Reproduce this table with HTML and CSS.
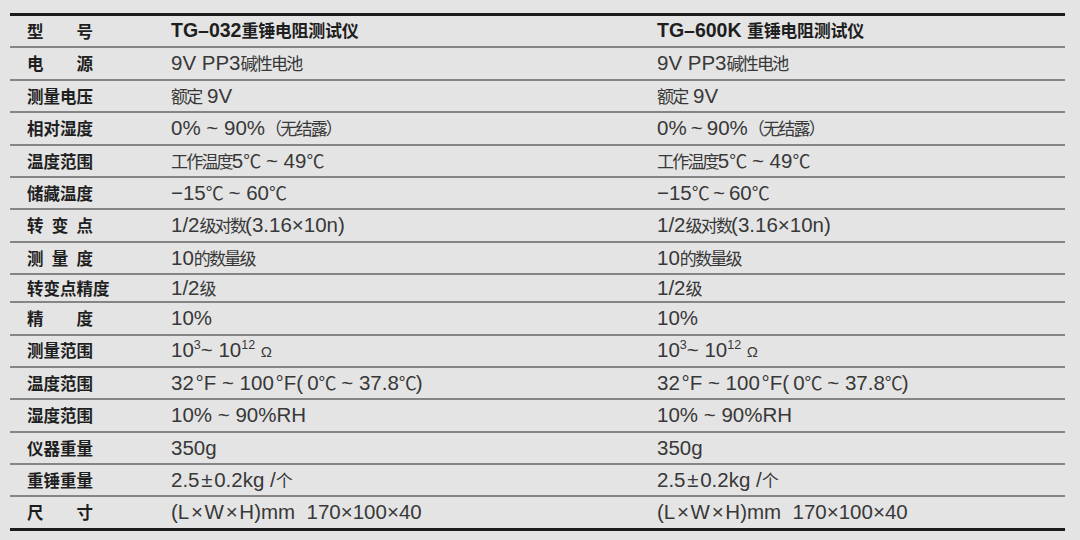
FILE: index.html
```html
<!DOCTYPE html>
<html lang="zh-CN">
<head>
<meta charset="utf-8">
<title>重锤电阻测试仪 参数</title>
<link rel="stylesheet" href="styles.css">
</head>
<body>
<div class="spec">
  <div class="row head">
    <div class="label"><span>型</span><span>号</span></div>
    <div class="val">TG–032<span class="zh">重锤电阻测试仪</span></div>
    <div class="val">TG–600K <span class="zh">重锤电阻测试仪</span></div>
  </div>
  <div class="row">
    <div class="label"><span>电</span><span>源</span></div>
    <div class="val">9V PP3<span class="zh">碱性电池</span></div>
    <div class="val">9V PP3<span class="zh">碱性电池</span></div>
  </div>
  <div class="row">
    <div class="label">测量电压</div>
    <div class="val"><span class="zh">额定</span> 9V</div>
    <div class="val"><span class="zh">额定</span> 9V</div>
  </div>
  <div class="row">
    <div class="label">相对湿度</div>
    <div class="val">0% ~ 90%<span class="zh">（无结露）</span></div>
    <div class="val">0%&#8201;~&#8201;90%<span class="zh">（无结露）</span></div>
  </div>
  <div class="row">
    <div class="label">温度范围</div>
    <div class="val"><span class="zh">工作温度</span>5<span class="deg">℃</span> ~ 49<span class="deg">℃</span></div>
    <div class="val"><span class="zh">工作温度</span>5<span class="deg">℃</span> ~ 49<span class="deg">℃</span></div>
  </div>
  <div class="row">
    <div class="label">储藏温度</div>
    <div class="val">−15<span class="deg">℃</span> ~ 60<span class="deg">℃</span></div>
    <div class="val">−15<span class="deg">℃</span>&#8201;~&#8201;60<span class="deg">℃</span></div>
  </div>
  <div class="row">
    <div class="label"><span>转</span><span>变</span><span>点</span></div>
    <div class="val">1/2<span class="zh">级对数</span>(3.16×10n)</div>
    <div class="val">1/2<span class="zh">级对数</span>(3.16×10n)</div>
  </div>
  <div class="row">
    <div class="label"><span>测</span><span>量</span><span>度</span></div>
    <div class="val">10<span class="zh">的数量级</span></div>
    <div class="val">10<span class="zh">的数量级</span></div>
  </div>
  <div class="row short">
    <div class="label">转变点精度</div>
    <div class="val">1/2<span class="zh">级</span></div>
    <div class="val">1/2<span class="zh">级</span></div>
  </div>
  <div class="row">
    <div class="label"><span>精</span><span>度</span></div>
    <div class="val">10%</div>
    <div class="val">10%</div>
  </div>
  <div class="row">
    <div class="label">测量范围</div>
    <div class="val">10<sup class="sup">3</sup>~ 10<sup class="sup">12</sup> <span class="ohm">Ω</span></div>
    <div class="val">10<sup class="sup">3</sup>~ 10<sup class="sup">12</sup> <span class="ohm">Ω</span></div>
  </div>
  <div class="row">
    <div class="label">温度范围</div>
    <div class="val">32&#8202;°F ~ 100&#8202;°F(&#8201;0<span class="deg">℃</span> ~ 37.8<span class="deg">℃</span>)</div>
    <div class="val">32&#8202;°F ~ 100&#8202;°F(&#8201;0<span class="deg">℃</span> ~ 37.8<span class="deg">℃</span>)</div>
  </div>
  <div class="row">
    <div class="label">湿度范围</div>
    <div class="val">10% ~ 90%RH</div>
    <div class="val">10% ~ 90%RH</div>
  </div>
  <div class="row">
    <div class="label">仪器重量</div>
    <div class="val">350g</div>
    <div class="val">350g</div>
  </div>
  <div class="row">
    <div class="label">重锤重量</div>
    <div class="val">2.5&#8202;±&#8202;0.2kg /<span class="zh">个</span></div>
    <div class="val">2.5&#8202;±&#8202;0.2kg /<span class="zh">个</span></div>
  </div>
  <div class="row last">
    <div class="label"><span>尺</span><span>寸</span></div>
    <div class="val">(L&#8202;×&#8202;W&#8202;×&#8202;H)mm&nbsp; 170×100×40</div>
    <div class="val">(L&#8202;×&#8202;W&#8202;×&#8202;H)mm&nbsp; 170×100×40</div>
  </div>
</div>
</body>
</html>
```

FILE: styles.css
```css
html, body {
  margin: 0;
  padding: 0;
  background: #e4e4e4;
}

body {
  width: 1080px;
  height: 540px;
  overflow: hidden;
}

.spec {
  margin: 13px 0 0 10px;
  width: 1055px;
  border-top: 3px solid #1c1c1c;
}

.row {
  display: grid;
  grid-template-columns: 161px 486px 1fr;
  align-items: center;
  height: 32.4px;
  box-sizing: border-box;
  border-bottom: 2px solid #858585;
}

.row.short {
  height: 28px;
}

.row.last {
  height: 33.4px;
  border-bottom: 3px solid #1c1c1c;
}

.label {
  margin-left: 17px;
  width: 66px;
  display: flex;
  justify-content: space-between;
  font-family: "Noto Sans CJK SC", sans-serif;
  font-weight: 700;
  font-size: 16.5px;
  line-height: 1;
  color: #1e1e1e;
  white-space: nowrap;
}

.val {
  font-family: "Liberation Sans", "Noto Sans CJK SC", sans-serif;
  font-size: 20.5px;
  line-height: 1;
  color: #383838;
  white-space: nowrap;
}

.zh {
  font-family: "Noto Sans CJK SC", sans-serif;
  font-size: 17px;
  letter-spacing: -1.8px;
}

.deg {
  font-family: "Noto Sans CJK SC", sans-serif;
  font-size: 18px;
  letter-spacing: -1px;
}

.head .val {
  font-weight: 700;
  font-size: 19.5px;
  color: #1e1e1e;
}

.head .zh {
  font-size: 17px;
  letter-spacing: -0.3px;
}

.sup {
  font-size: 12.5px;
  vertical-align: 8px;
  line-height: 0;
}

.ohm {
  font-size: 15px;
}
```
